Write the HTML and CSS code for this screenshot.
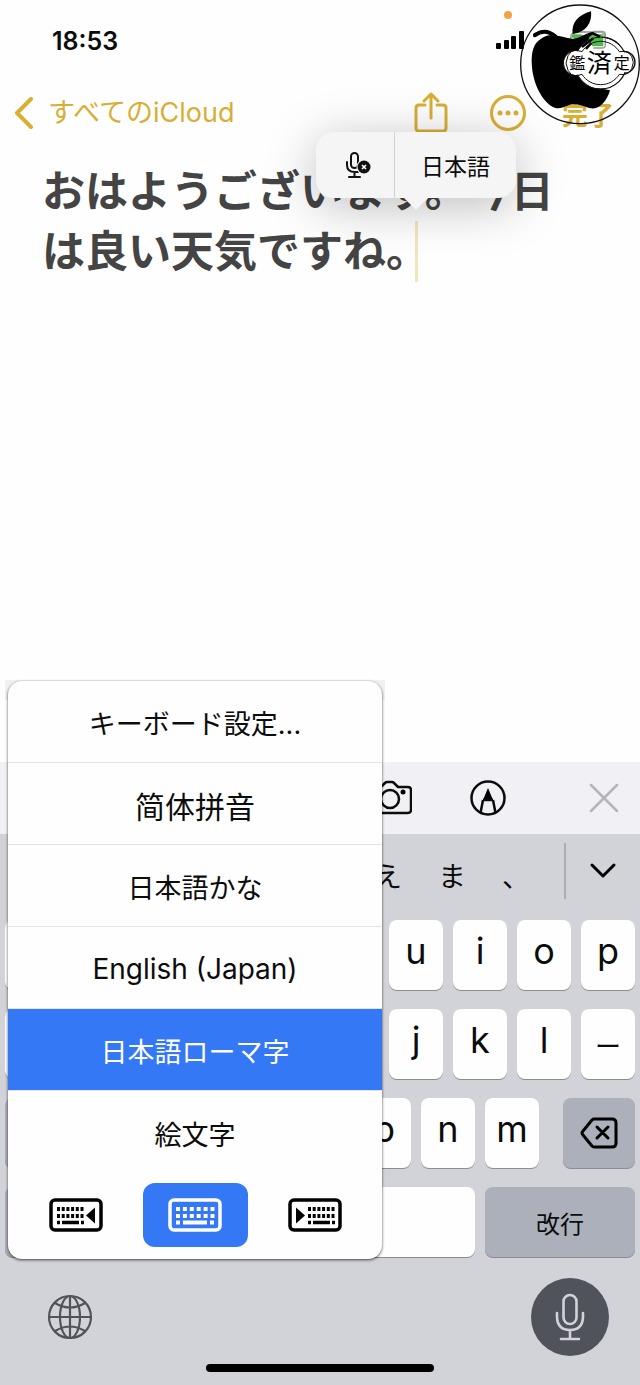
FILE: index.html
```html
<!DOCTYPE html>
<html lang="ja">
<head>
<meta charset="utf-8">
<meta name="viewport" content="width=device-width, initial-scale=1">
<title>メモ</title>
<link rel="stylesheet" href="styles.css">
</head>
<body>
<div class="phone">
  <header class="status">
    <time class="clock">18:53</time>
    <svg class="status-icons" width="120" height="44" viewBox="0 0 120 44" aria-hidden="true">
      <circle cx="12" cy="7" r="4" fill="#f2a344"/>
      <rect x="0" y="35" width="5" height="6" rx="1"/><rect x="8" y="32" width="5" height="9" rx="1"/><rect x="15" y="28" width="5" height="13" rx="1"/><rect x="23" y="23" width="5" height="18" rx="1"/>
      <path d="M39 27q10-7 20 1" fill="none" stroke="#000" stroke-width="4" stroke-linecap="round"/>
      <rect x="75" y="24" width="34" height="17" rx="5" fill="#fff" stroke="#aaa" stroke-width="2"/>
      <rect x="78" y="27" width="28" height="12" rx="3" fill="#52b84c"/>
    </svg>
  </header>

  <nav class="nav">
    <a class="back" href="#">
      <svg width="20" height="32" viewBox="0 0 20 32" aria-hidden="true"><path d="M17 2 3 16l14 14"/></svg>
      <span>すべてのiCloud</span>
    </a>
    <div class="actions">
      <button class="plain" aria-label="共有">
        <svg width="34" height="42" viewBox="0 0 34 42" aria-hidden="true"><path class="gold" d="M11 13H5q-3 0-3 3v20q0 3 3 3h24q3 0 3-3V16q0-3-3-3h-6M17 26V2m-7 7 7-7 7 7"/></svg>
      </button>
      <button class="plain" aria-label="その他">
        <svg width="36" height="36" viewBox="0 0 36 36" aria-hidden="true"><circle class="gold" cx="18" cy="18" r="16.500"/><g fill="#d9ae35"><circle cx="10" cy="18" r="2.500"/><circle cx="18" cy="18" r="2.500"/><circle cx="26" cy="18" r="2.500"/></g></svg>
      </button>
      <button class="plain done">完了</button>
    </div>
  </nav>

  <main class="note">
    <h1>おはようございます。今日<br>は良い天気ですね。</h1>
    <span class="caret"></span>
    <div class="callout">
      <button class="plain callout-mic" aria-label="音声入力を終了">
        <svg width="26" height="28" viewBox="0 0 26 28" aria-hidden="true">
          <g fill="none" stroke="#111" stroke-width="2" stroke-linecap="round"><rect x="6" y="2" width="7" height="15" rx="3.500"/><path d="M2 11v3q0 7 8 7h3M9.500 21v5M4 26h11"/></g>
          <circle cx="19" cy="16" r="7.500" fill="#f5f5f5"/><circle cx="19" cy="16" r="6.500" fill="#111"/><path d="m17 14 4 4m0-4-4 4" stroke="#fff" stroke-width="1.600"/>
        </svg>
      </button>
      <button class="plain callout-lang">日本語</button>
    </div>
  </main>

  <section class="keyboard">
    <div class="toolbar">
      <button class="plain" aria-label="カメラ">
        <svg width="40" height="36" viewBox="0 0 40 36" aria-hidden="true"><g class="line"><path d="M5 6h5l3-3q1-1 2-1h5q1 0 2 1l4 4h10q3 0 3 3v20q0 3-3 3H5q-3 0-3-3V9q0-3 3-3Z"/><circle cx="18" cy="19" r="9"/></g><circle cx="31" cy="12" r="2.500"/></svg>
      </button>
      <button class="plain" aria-label="マークアップ">
        <svg width="36" height="36" viewBox="0 0 36 36" aria-hidden="true"><circle class="line" cx="18" cy="18" r="16.500"/><path d="m18 8-5 12h10Z"/><path class="line" d="m13 20-2.500 13M23 20l2.500 13M13 20h10"/></svg>
      </button>
      <button class="plain close" aria-label="閉じる">
        <svg width="30" height="30" viewBox="0 0 30 30" aria-hidden="true"><path d="m2 2 26 26m0-26L2 28" stroke="#b4b4b9" stroke-width="2.500" stroke-linecap="round"/></svg>
      </button>
    </div>

    <div class="candidates">
      <button class="plain">え</button>
      <button class="plain">ま</button>
      <button class="plain">、</button>
      <button class="plain expand" aria-label="候補を表示">
        <svg width="28" height="18" viewBox="0 0 28 18" aria-hidden="true"><path d="m3 3 11 11L25 3" fill="none" stroke="#000" stroke-width="3" stroke-linecap="round" stroke-linejoin="round"/></svg>
      </button>
    </div>

    <div class="keys">
      <div class="row"><span class="key covered"></span><button class="key">u</button><button class="key">i</button><button class="key">o</button><button class="key">p</button></div>
      <div class="row"><span class="key covered"></span><button class="key">j</button><button class="key">k</button><button class="key">l</button><button class="key long">ー</button></div>
      <div class="row"><span class="key dark covered"></span><button class="key">b</button><button class="key">n</button><button class="key">m</button>
        <button class="key dark delete" aria-label="削除"><svg width="38" height="32" viewBox="0 0 38 32" aria-hidden="true"><path d="M14 2h18q4 0 4 4v20q0 4-4 4H14q-1 0-2-1L3 18q-2-2 0-4l9-11q1-1 2-1Zm3 8 11 11m0-11L17 21" fill="none" stroke="#000" stroke-width="3" stroke-linecap="round" stroke-linejoin="round"/></svg></button></div>
      <div class="row"><span class="key dark covered"></span><button class="key space" aria-label="空白"></button><button class="key dark return">改行</button></div>
    </div>

    <div class="bottom">
      <button class="plain" aria-label="次のキーボード">
        <svg width="46" height="46" viewBox="0 0 46 46" aria-hidden="true"><g fill="none" stroke="#505359" stroke-width="2.200"><circle cx="23" cy="23" r="21"/><ellipse cx="23" cy="23" rx="10" ry="21"/><path d="M23 2v42M2 23h42M8 9q15 9 30 0M8 37q15-9 30 0"/></g></svg>
      </button>
      <button class="plain mic" aria-label="音声入力">
        <svg width="32" height="48" viewBox="0 0 32 48" aria-hidden="true"><g fill="none" stroke="#d1d3d9" stroke-width="2.600" stroke-linecap="round"><rect x="9.500" y="2" width="13" height="29" rx="6.500"/><path d="M3 20v3q0 14 13 14t13-14v-3M16 37v9M7 46h18"/></g></svg>
      </button>
    </div>
    <div class="home"></div>

    <div class="menu-frame">
      <div class="menu">
        <button class="item">キーボード設定...</button>
        <button class="item chinese" lang="zh-Hans">简体拼音</button>
        <button class="item">日本語かな</button>
        <button class="item english" lang="en">English (Japan)</button>
        <button class="item selected">日本語ローマ字</button>
        <button class="item">絵文字</button>
        <div class="sides">
          <button class="side" aria-label="左寄せ">
            <svg width="54" height="34" viewBox="0 0 54 34" aria-hidden="true"><rect x="2" y="2" width="50" height="30" rx="4" fill="none" stroke="#000" stroke-width="3.500"/><path d="M8 11h27M8 18h27" stroke="#000" stroke-width="4" stroke-dasharray="3 1.700"/><path d="M8 24.500h3m2 0h17m2 0h3" stroke="#000" stroke-width="3.500"/><path d="m37 17.500 9-8v16Z"/></svg>
          </button>
          <button class="side active" aria-label="中央">
            <svg width="54" height="34" viewBox="0 0 54 34" aria-hidden="true"><rect x="2" y="2" width="50" height="30" rx="4" fill="none" stroke="#fff" stroke-width="3.500"/><path d="M8 11h39M8 18h39" stroke="#fff" stroke-width="4" stroke-dasharray="4 2.900"/><path d="M8 24.500h4m3 0h24m3 0h4" stroke="#fff" stroke-width="4"/></svg>
          </button>
          <button class="side" aria-label="右寄せ">
            <svg width="54" height="34" viewBox="0 0 54 34" aria-hidden="true"><rect x="2" y="2" width="50" height="30" rx="4" fill="none" stroke="#000" stroke-width="3.500"/><path d="M20 11h27M20 18h27" stroke="#000" stroke-width="4" stroke-dasharray="3 1.700"/><path d="M20 24.500h3m2 0h17m2 0h3" stroke="#000" stroke-width="3.500"/><path d="m17 17.500-9-8v16Z"/></svg>
          </button>
        </div>
      </div>
    </div>
  </section>

  <svg class="stamp" width="120" height="122" viewBox="120 10 360 366" role="img" aria-label="鑑済定">
    <circle cx="300" cy="194" r="178" fill="none" stroke="#111" stroke-width="4"/>
    <path d="M278 103C273 70 295 45 333 35 337 68 318 99 278 103Z"/>
    <path d="M182 118C210 94 240 112 276 117 300 118 315 100 338 97L362 110 330 128 340 150 340 262 390 272C384 296 365 324 344 326 320 328 305 312 280 314 258 316 248 330 224 324 190 312 154 250 155 180 156 146 166 128 182 118Z"/>
    <path d="M164 108q22-20 46-8" fill="none" stroke="#000" stroke-width="9" stroke-linecap="round"/>
    <g fill="#fff" stroke="#111" stroke-width="4"><circle cx="288" cy="190" r="38"/><circle cx="432" cy="188" r="33"/><circle cx="362" cy="190" r="78"/></g>
    <g fill="#fff"><circle cx="290" cy="190" r="35"/><circle cx="430" cy="188" r="30"/><circle cx="362" cy="190" r="75"/></g>
    <path d="M276 104h30l-14 10h-16ZM330 104h40v36h-32l-14-14Z" fill="#52b84c"/>
    <path d="M340 95h26q10 0 10 10v30q0 10-10 10h-26" fill="none" stroke="#999" stroke-width="4"/>
    <path d="m296 128 42-27 22 10M306 142l34-26M318 148l16-18" fill="none" stroke="#000" stroke-width="7"/>
    <path d="M300 143a78 78 0 0 1 124 0M306 156a66 66 0 0 1 112 0M306 224a66 66 0 0 0 112 0M306 156q-40-18-48 34 8 52 48 34M418 156q36-8 42 32-6 44-42 36" fill="none" stroke="#111" stroke-width="3"/>
    <g class="stamp-text" text-anchor="middle"><text x="292" y="207" font-size="48">鑑</text><text x="358" y="217" font-size="75">済</text><text x="425" y="207" font-size="48">定</text></g>
  </svg>
</div>
</body>
</html>
```
FILE: styles.css
```css
* { box-sizing: border-box; }

body {
  margin: 0;
  background: #fefefe;
  color: #0c0c0c;
  font-family: Inter, "Noto Sans CJK JP", sans-serif;
}

button {
  margin: 0;
  padding: 0;
  border: 0;
  color: inherit;
  font: inherit;
}

svg { display: block; }

.plain { background: none; }

.phone {
  position: relative;
  display: flex;
  flex-direction: column;
  min-height: 100vh;
  overflow: hidden;
}

.status {
  display: flex;
  justify-content: space-between;
  padding: 8px 24px 0 52px;
  height: 80px;
}

.clock {
  padding-top: 18px;
  font-size: 25px;
  font-weight: 600;
  line-height: 30px;
}

.nav {
  display: flex;
  align-items: center;
  justify-content: space-between;
  height: 66px;
  padding: 0 26px 0 14px;
  color: #d9ae35;
}

.back {
  display: flex;
  align-items: center;
  gap: 14px;
  color: inherit;
  font-size: 27px;
  line-height: 32px;
  text-decoration: none;
}

.back path,
.gold {
  fill: none;
  stroke: #d9ae35;
  stroke-width: 3;
  stroke-linecap: round;
  stroke-linejoin: round;
}

.back path { stroke-width: 4; }

.actions {
  display: flex;
  align-items: center;
  gap: 42px;
}

.done {
  margin-left: -6px;
  font-size: 26px;
  font-weight: 700;
}

.note {
  position: relative;
  flex: 1;
  padding: 15px 40px 0 42px;
}

.note h1 {
  margin: 0;
  color: #444;
  font-size: 43px;
  font-weight: 700;
  line-height: 60px;
  white-space: nowrap;
}

.caret {
  position: absolute;
  top: 75px;
  left: 415px;
  width: 3px;
  height: 61px;
  background: #f3e6bd;
}

.callout {
  position: absolute;
  top: -14px;
  left: 316px;
  display: flex;
  width: 200px;
  height: 66px;
  border-radius: 18px;
  background: #f5f5f5;
  box-shadow: 0 8px 50px rgba(0, 0, 0, 0.26);
}

.callout::after {
  content: "";
  position: absolute;
  top: 100%;
  left: 88px;
  border: 12px solid transparent;
  border-top-color: #f5f5f5;
  border-bottom: 0;
}

.callout-mic {
  display: grid;
  place-items: center;
  width: 79px;
  padding-left: 6px;
  border-right: 1px solid #d2d2d2;
}

.callout-lang {
  flex: 1;
  font-size: 23px;
}

.keyboard {
  position: relative;
  background: #d1d3d9;
}

.toolbar {
  display: flex;
  align-items: center;
  justify-content: flex-end;
  gap: 58px;
  height: 72px;
  padding-right: 21px;
  background: #f1f0f5;
}

.close { margin-left: 25px; }

.line {
  fill: none;
  stroke: #0c0c0c;
  stroke-width: 2.5;
}

.candidates {
  display: flex;
  align-items: center;
  justify-content: flex-end;
  gap: 36px;
  height: 82px;
  font-size: 28px;
}

.expand {
  display: grid;
  place-items: center;
  width: 76px;
  height: 56px;
  margin: -8px 0 0 -2px;
  border-left: 2px solid #acadb2;
}

.keys {
  display: flex;
  flex-direction: column;
  gap: 19px;
  padding: 4px 5px 0;
}

.row {
  display: flex;
  gap: 10px;
}

.key {
  display: grid;
  place-items: center;
  flex: none;
  width: 54px;
  height: 70px;
  padding-bottom: 8px;
  border-radius: 8px;
  background: #fefefe;
  box-shadow: 0 1px 0 #8b8c90;
  font-size: 36px;
}

.key.covered {
  flex: 1;
  width: auto;
}

.key.dark { background: #abb0bb; }

.key.long {
  padding: 0;
  font-size: 26px;
}

.key.delete {
  width: 72px;
  margin-left: 14px;
  padding: 0;
}

.key.space { width: 150px; }

.key.return {
  width: 150px;
  padding: 0;
  font-size: 24px;
}

.bottom {
  display: flex;
  align-items: center;
  justify-content: space-between;
  padding: 21px 31px 0 47px;
}

.mic {
  display: grid;
  place-items: center;
  width: 78px;
  height: 78px;
  border-radius: 50%;
  background: #505359;
}

.home {
  width: 228px;
  height: 8px;
  margin: 8px auto 13px;
  border-radius: 4px;
  background: #000;
}

.menu-frame {
  position: absolute;
  bottom: 126px;
  left: 5px;
  width: 380px;
  padding: 1px 3px 0;
  background: linear-gradient(#f1f1f1, #f1f1f1) top / 100% 20px no-repeat;
}

.menu {
  overflow: hidden;
  border-radius: 14px;
  background: #fefefe;
  box-shadow: 0 1px 3px rgba(0, 0, 0, 0.7);
}

.item {
  display: block;
  width: 100%;
  height: 82px;
  padding-top: 2px;
  border-bottom: 1px solid #e4e4e4;
  background: none;
  font-size: 27px;
}

.item.chinese {
  font-family: "Noto Sans CJK SC", sans-serif;
  font-size: 30px;
}

.item.english { font-size: 28px; }

.item.selected {
  background: #3478f6;
  color: #fefefe;
}

.item:nth-child(6) { border-bottom: 0; }

.sides {
  display: flex;
  justify-content: space-between;
  padding: 10px 15px 12px;
}

.side {
  display: grid;
  place-items: center;
  width: 105px;
  height: 64px;
  border-radius: 12px;
  background: none;
}

.side.active { background: #3478f6; }

.stamp {
  position: absolute;
  top: 3px;
  right: 0;
}

.stamp-text { font-family: "Noto Sans CJK JP", sans-serif; }
```
